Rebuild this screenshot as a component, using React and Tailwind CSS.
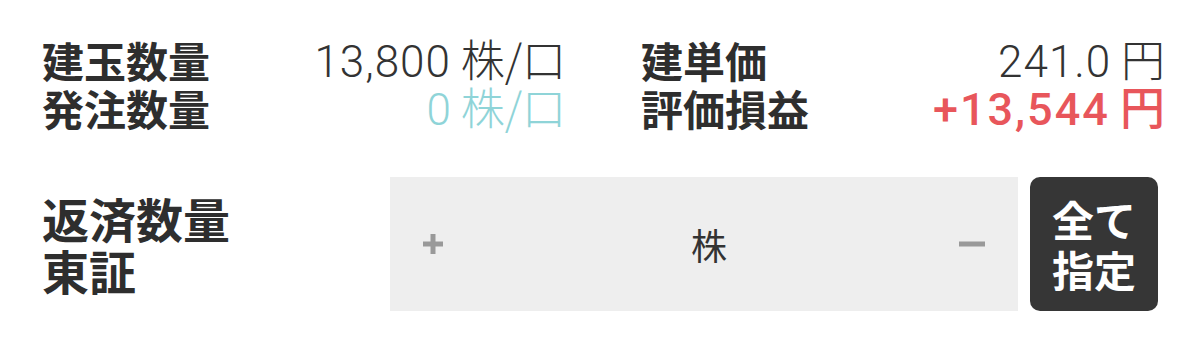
const jp = { fontFamily: '"Noto Sans CJK JP", "Noto Sans", sans-serif' }

const Fila = ({ label, value, valueClass }) => (
  <div className="flex items-center justify-between h-[48px]">
    <span className="text-[42px] font-bold text-[#2e2e2e] leading-[48px]">{label}</span>
    <span className={"leading-[48px] " + valueClass}>{value}</span>
  </div>
)

const App = () => {
  return (
    <div className="w-[1200px] h-[341px] bg-white overflow-hidden" style={jp}>
      <div className="pl-[42px] pr-[35px] pt-[36px] grid grid-cols-2 gap-x-[75px]">
        <div>
          <Fila
            label="建玉数量"
            value={<><span className="font-['Roboto'] font-light tracking-[1px]">13,800</span> 株/口</>}
            valueClass="text-[44px] font-light text-[#333333]"
          />
          <Fila
            label="発注数量"
            value={<><span className="font-['Roboto'] font-light">0</span> 株/口</>}
            valueClass="text-[44px] font-light text-[#8fd4d8]"
          />
        </div>
        <div>
          <Fila
            label="建単価"
            value={<><span className="font-['Roboto'] font-light tracking-[1px]">241.0</span> 円</>}
            valueClass="text-[44px] font-light text-[#333333]"
          />
          <Fila
            label="評価損益"
            value={<><span className="font-['Roboto'] font-medium tracking-[2px]">+13,544</span> 円</>}
            valueClass="text-[45px] font-medium text-[#e8565b]"
          />
        </div>
      </div>

      <div className="mt-[45px] pl-[42px] flex h-[134px]">
        <div className="w-[348px] flex flex-col justify-center text-[47px] font-bold text-[#2e2e2e] leading-[52px]">
          <span>返済数量</span>
          <span>東証</span>
        </div>
        <div className="w-[628px] bg-[#eeeeee] flex items-center justify-between px-[33px]">
          <svg viewBox="0 0 20 20" className="w-[20px] h-[20px] shrink-0">
            <path d="M10 0v20M0 10h20" stroke="#999999" strokeWidth="5" />
          </svg>
          <span className="text-[36px] text-[#333333] leading-none pl-[16px]">株</span>
          <svg viewBox="0 0 26 6" className="w-[26px] h-[6px] shrink-0">
            <path d="M0 3h26" stroke="#999999" strokeWidth="5" />
          </svg>
        </div>
        <button className="ml-[12px] w-[128px] rounded-[10px] bg-[#363636] text-white text-[42px] font-bold leading-[50px] flex flex-col items-center justify-center">
          <span>全て</span>
          <span>指定</span>
        </button>
      </div>
    </div>
  )
}

export default App
